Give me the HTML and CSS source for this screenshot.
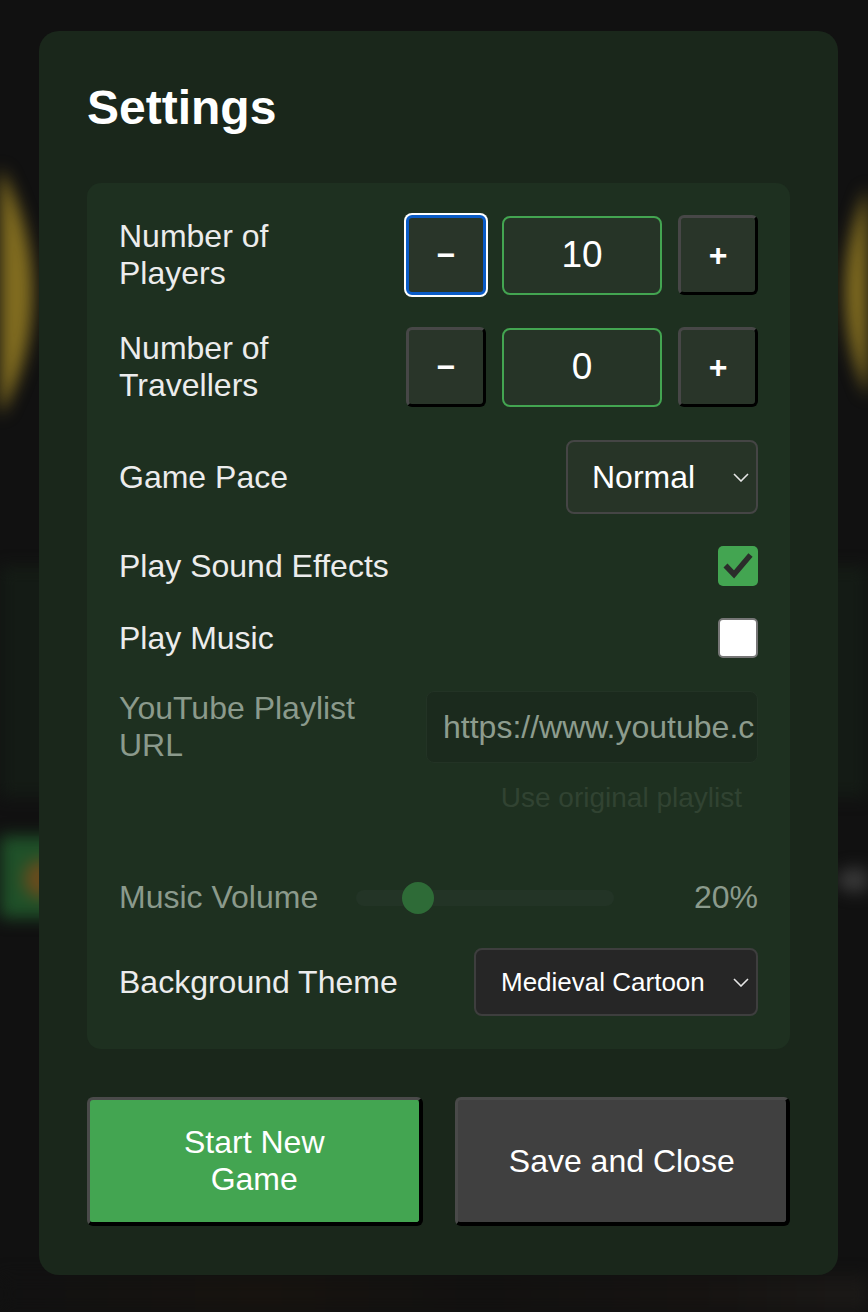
FILE: index.html
```html
<!DOCTYPE html>
<html lang="en">
<head>
    <meta charset="UTF-8">
    <title>Settings</title>
    <link rel="stylesheet" href="styles.css">
</head>
<body>
    <div class="backdrop">
        <div class="sun sun-left"></div>
        <div class="sun sun-right"></div>
        <div class="band-dim"></div>
        <div class="band-green"></div>
        <div class="ember"></div>
        <div class="puck"></div>
        <div class="floor"></div>
    </div>

    <div class="modal">
        <h2 class="modal-title">Settings</h2>

        <div class="panel">
            <div class="row">
                <span class="row-label">Number of Players</span>
                <div class="stepper">
                    <button class="step-btn is-focused">&minus;</button>
                    <div class="step-value">10</div>
                    <button class="step-btn">+</button>
                </div>
            </div>

            <div class="row">
                <span class="row-label">Number of Travellers</span>
                <div class="stepper">
                    <button class="step-btn">&minus;</button>
                    <div class="step-value">0</div>
                    <button class="step-btn">+</button>
                </div>
            </div>

            <div class="row row-pace">
                <span class="row-label">Game Pace</span>
                <div class="select select-pace">
                    <span>Normal</span>
                    <svg class="chevron" width="16" height="9" viewBox="0 0 16 9"><path d="M1 1l7 7 7-7" fill="none" stroke="#e6e6e6" stroke-width="1.6"/></svg>
                </div>
            </div>

            <div class="row">
                <span class="row-label">Play Sound Effects</span>
                <span class="checkbox checked">
                    <svg width="40" height="40" viewBox="0 0 40 40"><path d="M7.5 19.5l8.5 9L32.5 9" fill="none" stroke="#2b2d2b" stroke-width="5.5"/></svg>
                </span>
            </div>

            <div class="row">
                <span class="row-label">Play Music</span>
                <span class="checkbox"></span>
            </div>

            <div class="group">
                <div class="row">
                    <span class="row-label muted">YouTube Playlist URL</span>
                    <input class="url-input" type="text" value="https://www.youtube.com/playlist?list=PL4fGSI1pDJn6" disabled>
                </div>
                <button class="hint-btn" disabled>Use original playlist</button>
            </div>

            <div class="row volume-row">
                <span class="row-label muted">Music Volume</span>
                <div class="slider">
                    <span class="slider-thumb" style="left: 20%;"></span>
                </div>
                <span class="volume-value">20%</span>
            </div>

            <div class="row">
                <span class="row-label">Background Theme</span>
                <div class="select select-theme">
                    <span>Medieval Cartoon</span>
                    <svg class="chevron" width="16" height="9" viewBox="0 0 16 9"><path d="M1 1l7 7 7-7" fill="none" stroke="#e6e6e6" stroke-width="1.6"/></svg>
                </div>
            </div>
        </div>

        <div class="actions">
            <button class="action action-primary">Start New Game</button>
            <button class="action">Save and Close</button>
        </div>
    </div>
</body>
</html>
```

FILE: styles.css
```css
body{margin:0;padding:31px 0 0 39px;background-color:#111;font-family:"Liberation Sans",Arial,sans-serif;color:#ededed;overflow:hidden;}
button{font-family:inherit;}

/* blurred game board behind the dialog */
.backdrop{position:fixed;left:0;top:0;right:0;bottom:0;overflow:hidden;filter:blur(8px);}
.backdrop div{position:absolute;}
.sun{width:500px;height:500px;border-radius:50%;background-color:#826d20;top:42px;}
.sun-left{left:-467px;}
.sun-right{left:845px;}
.band-dim{left:0;right:0;top:568px;height:226px;background-color:#141b15;border-top:3px solid #172418;}
.band-green{left:-40px;width:110px;top:836px;height:82px;background-color:#1f5129;}
.ember{left:24px;top:860px;width:34px;height:38px;border-radius:50%;background-color:#6a4b1c;}
.puck{left:836px;top:868px;width:40px;height:24px;border-radius:50%;background-color:#393939;}
.floor{left:0;right:0;top:1276px;bottom:0;background:linear-gradient(90deg,#111 0%,#17130f 30%,#121110 55%,#161311 80%,#1b1917 100%);}

.modal{
    position:relative;
    box-sizing:border-box;
    width:799px;
    height:1244px;
    padding:48px;
    border-radius:20px;
    background-color:#1a271b;
}
.modal-title{margin:2px 0 48px;font-size:48px;font-weight:bold;line-height:54px;color:#fff;}

.panel{
    display:flex;
    flex-direction:column;
    gap:32px;
    padding:32px 32px 33px;
    border-radius:14px;
    background-color:#1e3020;
}
.row{display:flex;align-items:center;justify-content:space-between;gap:32px;}
.row-pace{padding:1px 0 0;}
.row-label{flex:1;min-width:0;font-size:32px;line-height:37px;color:#ececec;}
.row-label.muted{color:#8b9a8c;}

.stepper{display:flex;align-items:center;gap:16px;flex:none;}
.step-btn{
    box-sizing:border-box;
    width:80px;height:80px;
    padding:0;
    border:3px solid;
    border-color:#474747 #000 #000 #474747;
    border-radius:6px;
    background-color:#293529;
    color:#fff;
    font-size:32px;font-weight:bold;
}
.step-btn.is-focused{border-color:#0a5bc6;box-shadow:0 0 0 2px #fff;}
.step-value{
    box-sizing:border-box;
    width:160px;height:79px;
    display:flex;align-items:center;justify-content:center;
    border:2px solid #43a551;
    border-radius:8px;
    background-color:#263427;
    color:#fff;font-size:37px;
}

.select{
    box-sizing:border-box;
    display:flex;align-items:center;justify-content:space-between;
    flex:none;
    border:2px solid #454545;
    border-radius:8px;
    color:#fff;
}
.select-pace{width:192px;height:74px;padding:0 7px 0 24px;background-color:#273427;font-size:32px;}
.select-theme{width:284px;height:68px;padding:0 7px 0 25px;background-color:#262626;border-color:#3e3e3e;font-size:26px;}

.checkbox{box-sizing:border-box;width:40px;height:40px;flex:none;border-radius:5px;background-color:#fff;border:2px solid #767676;}
.checkbox.checked{border:0 none;background-color:#43a551;}
.checkbox svg{display:block;}

.group{display:flex;flex-direction:column;align-items:flex-end;padding-bottom:25px;}
.group .row{align-self:stretch;}
.url-input{
    box-sizing:border-box;
    width:332px;height:72px;flex:none;
    margin:0;padding:0 2px 0 16px;
    border:1px solid #233325;
    border-radius:8px;
    background-color:#1b2a1d;
    font-family:inherit;font-size:32px;
    color:#8d9c8e;-webkit-text-fill-color:#8d9c8e;
    opacity:1;
}
.hint-btn{margin-top:10px;padding:8px 16px;border:0 none;background:none;font-size:28px;line-height:32px;color:#314332;}

.volume-row{justify-content:flex-start;gap:0;}
.volume-row .row-label{flex:none;width:237px;}
.slider{position:relative;width:258px;height:16px;border-radius:8px;background-color:#233426;}
.slider-thumb{position:absolute;top:-8px;width:32px;height:32px;margin-left:-6px;border-radius:50%;background-color:#2e6b37;}
.volume-value{margin-left:auto;font-size:32px;line-height:37px;color:#8b9a8c;}

.actions{display:grid;grid-template-columns:1fr 1fr;gap:32px;margin-top:48px;}
.action{
    padding:24px 48px;
    border-style:solid;
    border-width:3px 4px 4px 3px;
    border-color:#4a4a4a #000 #000 #4a4a4a;
    border-radius:6px;
    background-color:#404040;
    color:#fff;
    font-size:32px;line-height:37px;
}
.action-primary{background-color:#43a551;}
```
